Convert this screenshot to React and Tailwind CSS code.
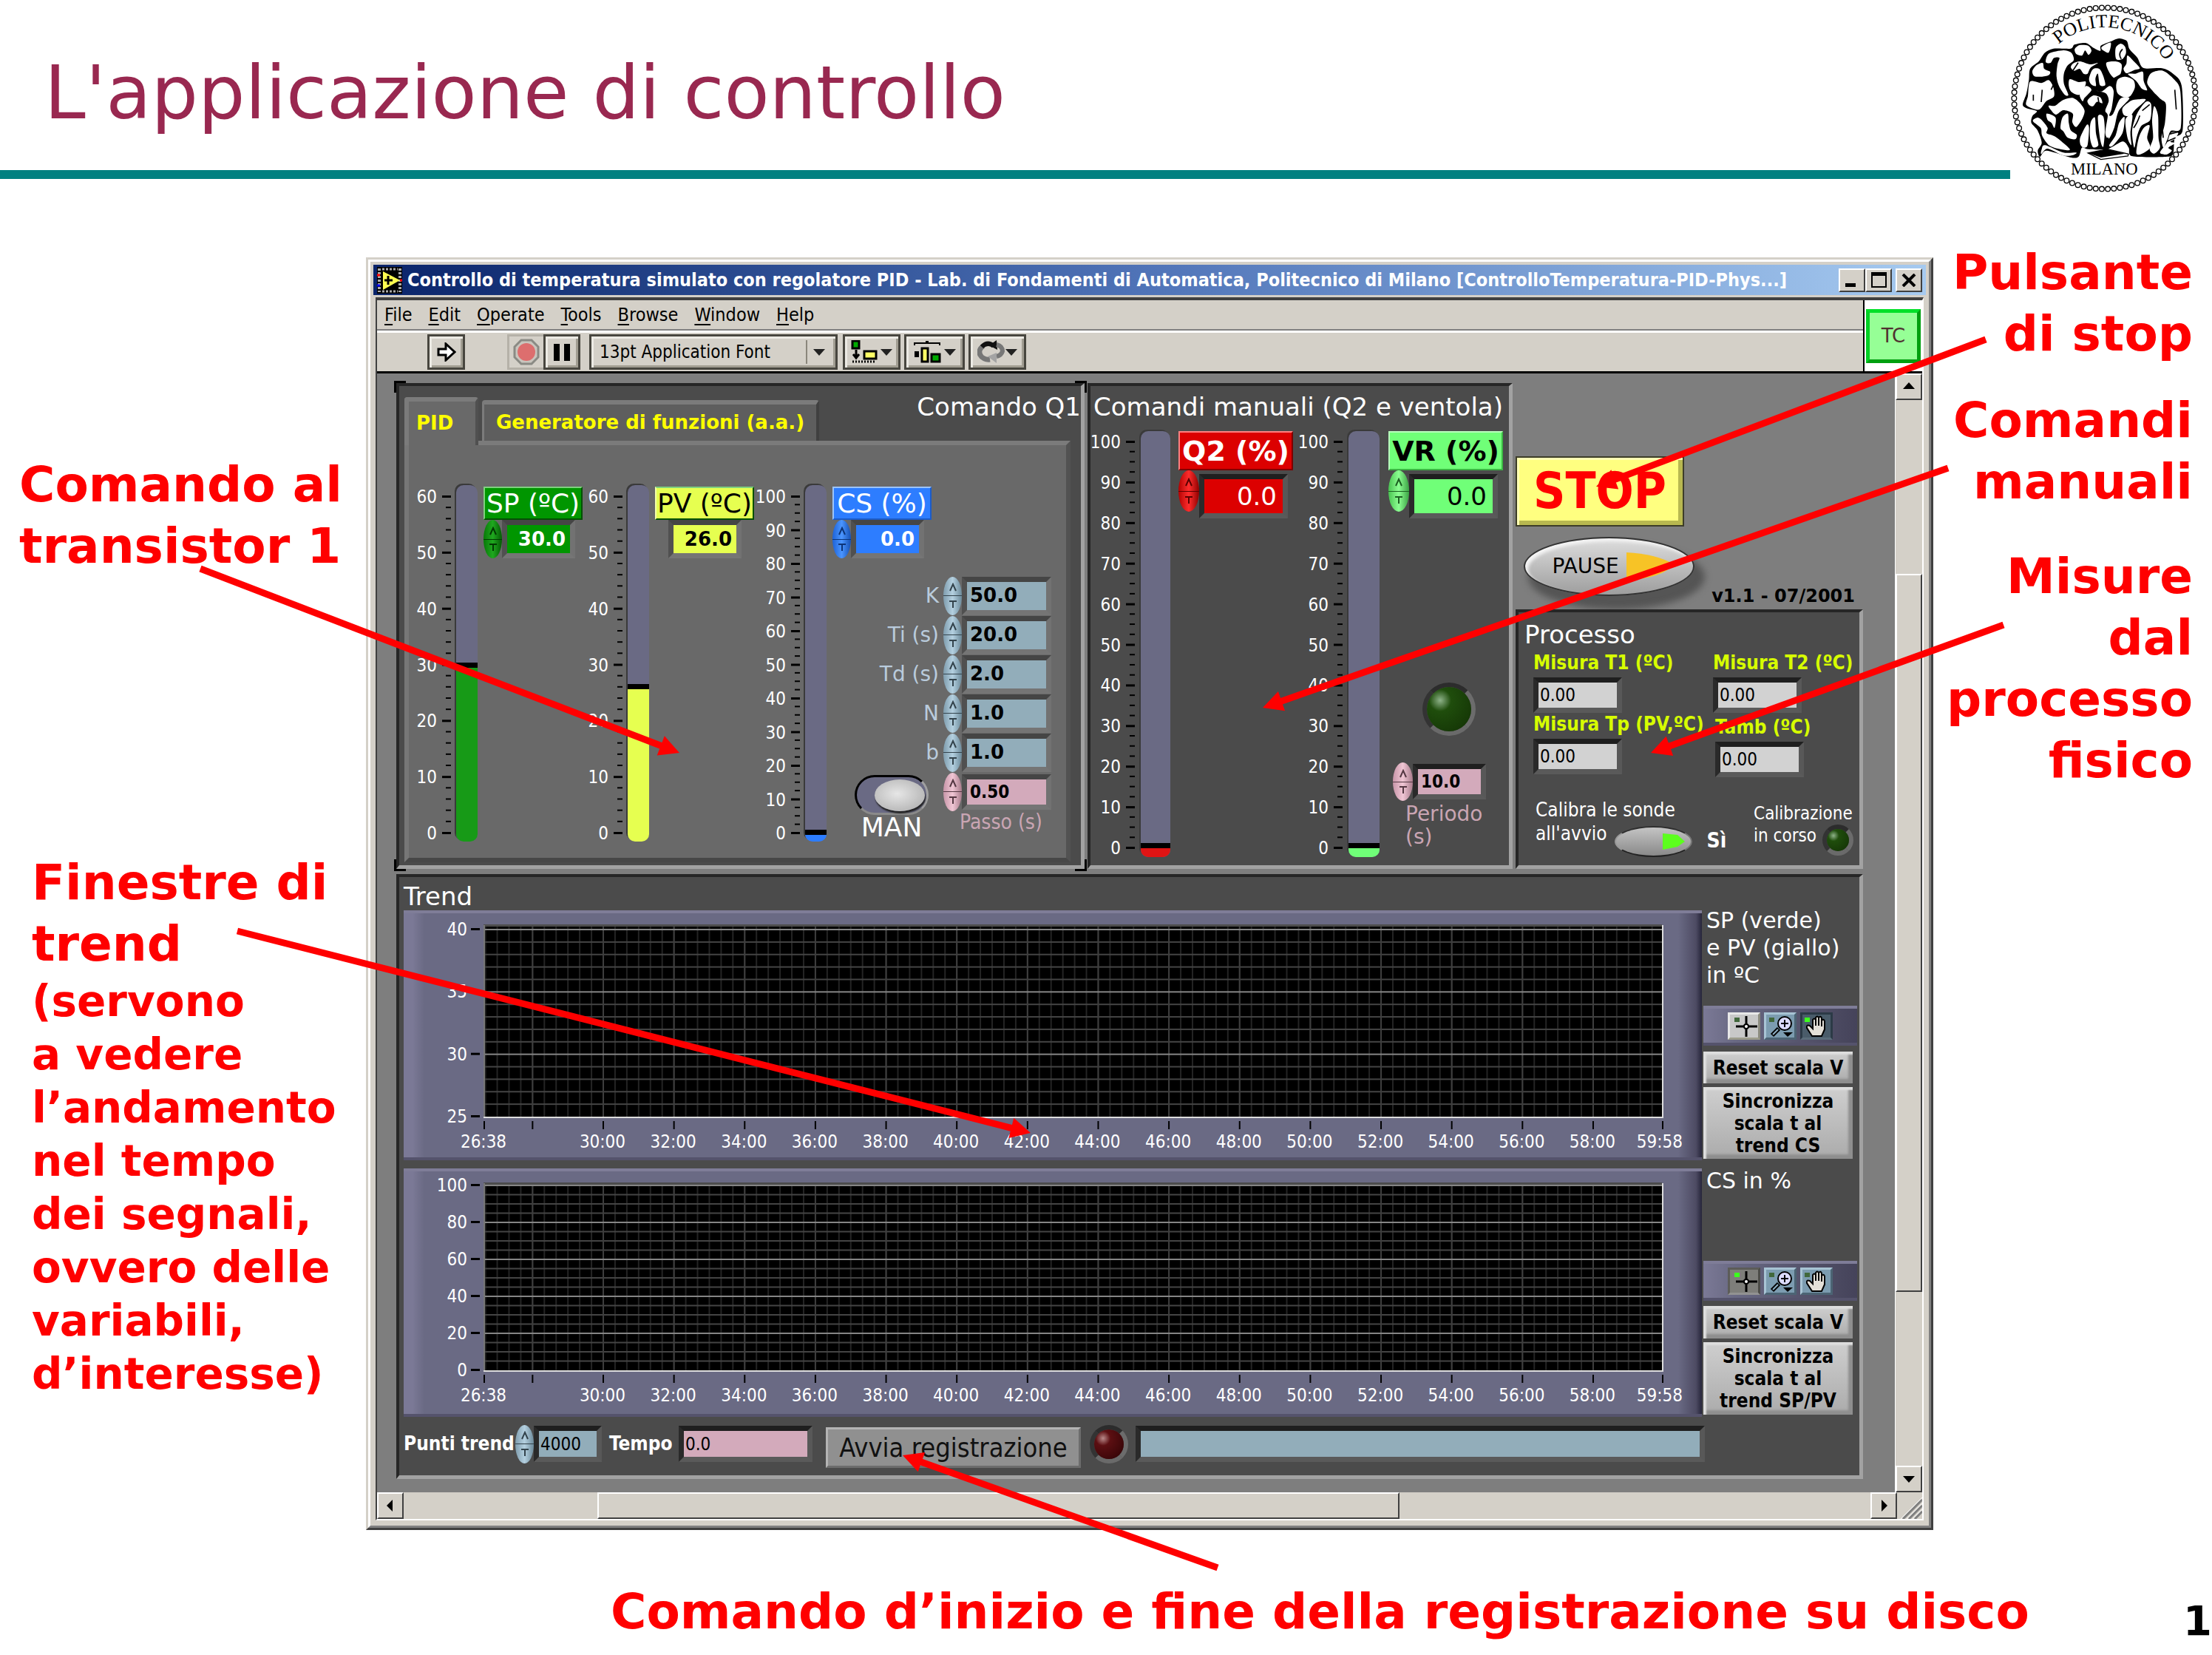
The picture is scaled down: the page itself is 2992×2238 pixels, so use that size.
import React from "react";

const CONDENSED = "font-[family-name:'DejaVu_Sans_Condensed','DejaVu_Sans',sans-serif]";

/* ---------- helpers for drawings ---------- */

function blob(text) {
  const p = text.split(" ").map((s) => s.split(",").map(Number));
  const n = p.length;
  let d = `M${p[0][0]} ${p[0][1]}`;
  for (let i = 0; i < n; i++) {
    const a = p[(i + n - 1) % n];
    const b = p[i];
    const c = p[(i + 1) % n];
    const e = p[(i + 2) % n];
    const k = 7;
    d += `C${b[0] + (c[0] - a[0]) / k} ${b[1] + (c[1] - a[1]) / k} ${c[0] - (e[0] - b[0]) / k} ${c[1] - (e[1] - b[1]) / k} ${c[0]} ${c[1]}`;
  }
  return d + "Z";
}

const SILHOUETTE =
  "135,425 150,380 160,325 165,280 200,250 225,215 260,198 330,198 345,182 390,175 422,195 450,207 452,186 495,168 525,157 557,167 568,200 600,235 625,277 700,278 745,300 780,350 784,528 752,560 745,625 715,637 580,635 565,600 540,575 480,605 400,606 375,600 362,636 330,640 232,612 205,637 196,612 212,580 195,530 170,500 174,472 192,452 150,440";

const WHITES = [
  "174,290 190,266 216,256 222,280 246,292 240,306 210,312 182,310",
  "228,252 242,218 300,205 332,215 342,245 316,268 302,300 302,340 320,385 306,386 282,350 272,310 276,262 284,236 262,236 248,256",
  "165,332 210,338 240,326 258,352 262,392 230,412 200,446 150,428 156,390",
  "346,200 366,184 400,186 414,206 402,224 388,206 376,226 352,220",
  "340,258 368,250 408,262 440,256 410,276 398,300 382,300 366,280 344,288 330,274",
  "428,278 448,282 462,310 470,346 448,346 440,300 430,320 432,350 412,342 404,322 414,290",
  "326,322 362,334 390,332 386,356 364,386 332,374 322,350",
  "455,192 492,174 484,214 462,206",
  "512,196 532,178 550,190 554,216 540,240 514,240",
  "474,256 512,250 536,262 532,300 508,318 486,294",
  "560,226 586,250 610,278 586,286 556,298 544,280 556,258",
  "514,350 522,322 552,312 584,326 590,356 572,390 546,396 520,380",
  "592,300 622,292 626,330 640,366 618,360 596,330 562,302",
  "640,338 656,298 704,288 748,322 774,368 776,520 736,532 722,566 706,600 698,560 712,500 716,424 696,404 664,372",
  "692,620 720,580 736,540 766,540 750,566 734,576 752,582 726,600 740,612 718,628",
  "580,520 600,460 634,414 656,424 652,488 616,512 598,556 588,600 580,560",
  "540,440 574,410 604,404 634,406 590,448 572,470 546,468",
  "668,432 684,470 686,560 692,600 668,624 650,606 664,560 660,490",
  "606,560 626,520 650,510 640,560 652,600 616,626 596,622",
  "430,368 456,372 488,350 504,372 496,440 486,470 502,462 530,402 568,400 524,452 506,520 484,564 470,540 480,470 470,450 484,410 472,380",
  "398,408 422,388 450,396 458,420 436,414 420,432 404,426",
  "366,384 392,350 414,366 386,398 378,412",
  "240,430 266,430 296,408 336,398 366,418 386,450 376,484 352,516 336,496 338,462 300,448 270,466 250,448",
  "176,492 196,478 216,492 236,520 232,542 268,556 326,606 296,608 244,592 214,552 208,520",
  "296,478 318,462 322,500 330,530 354,548 348,566 318,560 300,534 288,520",
  "232,462 268,478 264,520 252,500 236,488",
  "212,606 226,590 300,620 352,620 340,630 300,632 236,604 210,626",
  "368,560 394,508 404,520 398,590 384,600 370,590",
  "410,500 428,478 432,540 442,590 420,598 408,560",
  "440,474 462,474 468,530 462,596 450,570",
  "526,500 548,476 540,540 500,592 486,590 512,550",
  "552,486 580,468 572,540 576,590 560,560",
  "690,300 706,306 700,312 686,306",
];

const LINES =
  "M178 385V410M214 365L210 415M752 365L758 445M440 395L448 440M250 365L262 340M268 352V395M540 200Q520 220 535 240M680 440Q700 480 705 560M610 470Q600 500 585 520M730 545L770 535M720 575L755 560M480 600L480 560M620 450L650 425M360 255L330 300M505 320L540 300";

function Seal() {
  const ring = Array.from({ length: 94 }, (_, i) => {
    const a = (i / 94) * Math.PI * 2;
    return [468 + Math.cos(a) * 368, 400 + Math.sin(a) * 368];
  });
  return (
    <svg viewBox="84 16 768 768" className="block h-[256px] w-[256px]" role="img" aria-label="Politecnico Milano">
      {ring.map(([x, y], i) => (
        <circle key={i} cx={x} cy={y} r="10" fill="none" stroke="#000" strokeWidth="4" />
      ))}
      <path id="seal-arc" d="M194 309A289 289 0 0 1 757 400" fill="none" />
      <text className="font-[family-name:'Liberation_Serif',serif]" fontSize="76" fill="#000">
        <textPath href="#seal-arc" startOffset="156">POLITECNICO</textPath>
      </text>
      <path d={blob(SILHOUETTE)} fill="#000" />
      {WHITES.map((w) => (
        <path key={w} d={blob(w)} fill="#fff" />
      ))}
      <path d={LINES} fill="none" stroke="#000" strokeWidth="5" />
      <path d="M400 622L478 606L564 626L562 634L452 648Z" fill="#fff" stroke="#000" strokeWidth="4" />
      <path d="M400 622L478 606L550 624L452 640Z" fill="#000" />
      <path d="M470 560H484V615H466Z" fill="#000" />
      <text x="466" y="710" textAnchor="middle" className="font-[family-name:'Liberation_Serif',serif]" fontSize="68" fill="#000">
        MILANO
      </text>
    </svg>
  );
}

/* ---------- annotation arrows ---------- */

const ARROWS = [
  [271, 769, 919, 1018],
  [321, 1259, 1394, 1532],
  [2686, 459, 2159, 658],
  [2635, 633, 1708, 957],
  [2710, 845, 2233, 1018],
  [1647, 2120, 1221, 1968],
];

function Arrows() {
  return (
    <svg viewBox="0 0 2992 2238" className="pointer-events-none absolute left-0 top-0 w-full" aria-hidden="true">
      {ARROWS.map(([x1, y1, x2, y2]) => {
        const l = Math.hypot(x2 - x1, y2 - y1);
        const ux = (x2 - x1) / l;
        const uy = (y2 - y1) / l;
        const bx = x2 - ux * 27;
        const by = y2 - uy * 27;
        return (
          <g key={x1} fill="#f00" stroke="#f00">
            <line x1={x1} y1={y1} x2={bx + ux * 4} y2={by + uy * 4} strokeWidth="9" />
            <path stroke="none" d={`M${x2} ${y2}L${bx - uy * 14} ${by + ux * 14}L${bx + uy * 14} ${by - ux * 14}Z`} />
          </g>
        );
      })}
    </svg>
  );
}

/* ---------- Windows widgets ---------- */

const RAISED = "border-2 border-t-white border-l-white border-r-[#404040] border-b-[#404040] bg-[#d4d0c8]";
const TOOL = "flex h-12 items-center justify-center border-[3px] border-[#48463f] bg-[#d4d0c8] shadow-[inset_3px_3px_0_#eceae4,inset_-3px_-3px_0_#a19d92]";

function VIIcon() {
  return (
    <svg viewBox="0 0 34 36" className="h-9 w-[34px] shrink-0" aria-hidden="true">
      <rect width="34" height="36" fill="#000" />
      <path d="M3 2V34M31 2V34" stroke="#aaa" strokeWidth="4" strokeDasharray="3 2" />
      <path d="M7 3H28M7 33H28" stroke="#aaa" strokeWidth="3" strokeDasharray="3 2" />
      <path d="M8 6L31 18L8 31Z" fill="#ffff50" />
      <path d="M10 18H21M15 12V24" stroke="#000" strokeWidth="3" />
      <path d="M0 11H4M31 18H34" stroke="#f00" strokeWidth="3" />
      <path d="M0 25H4" stroke="#00f" strokeWidth="3" />
    </svg>
  );
}

function TitleBar() {
  return (
    <div className="flex h-[41px] items-center gap-[7px] bg-linear-to-r from-[#0a246a] via-[#5074b8] to-[#a6caf0] px-[5px]">
      <VIIcon />
      <span className={"flex-1 whitespace-nowrap text-[25px] leading-none font-bold text-white " + CONDENSED}>
        Controllo di temperatura simulato con regolatore PID - Lab. di Fondamenti di Automatica, Politecnico di Milano [ControlloTemperatura-PID-Phys...]
      </span>
      <div className="flex">
        <button aria-label="Minimize" className={"flex h-8 w-9 items-end px-[7px] pb-[5px] " + RAISED}>
          <span className="h-[5px] w-[14px] bg-black" />
        </button>
        <button aria-label="Maximize" className={"flex h-8 w-9 items-center justify-center " + RAISED}>
          <span className="h-[21px] w-[21px] border-2 border-t-[5px] border-black" />
        </button>
        <button aria-label="Close" className={"ml-[5px] flex h-8 w-9 items-center justify-center " + RAISED}>
          <svg viewBox="0 0 20 18" className="h-[18px] w-5">
            <path d="M2 1L18 17M18 1L2 17" stroke="#000" strokeWidth="4" />
          </svg>
        </button>
      </div>
    </div>
  );
}

const MENUS = [
  ["F", "ile"],
  ["E", "dit"],
  ["O", "perate"],
  ["T", "ools"],
  ["B", "rowse"],
  ["W", "indow"],
  ["H", "elp"],
];

function Caret() {
  return (
    <svg viewBox="0 0 16 9" className="h-[9px] w-4" aria-hidden="true">
      <path d="M0 0H16L8 9Z" fill="#222" />
    </svg>
  );
}

function Toolbar() {
  return (
    <div className="flex h-[52px] items-center pl-[68px]">
      <button aria-label="Run" className={"w-[51px] " + TOOL}>
        <svg viewBox="0 0 26 26" className="h-[26px] w-[26px]">
          <path d="M2 9H12V2L24 13L12 24V17H2Z" fill="#fff" stroke="#000" strokeWidth="3" />
        </svg>
      </button>
      <button aria-label="Abort" className="ml-[57px] flex h-12 w-[49px] items-center justify-center border-[3px] border-r-0 border-[#b5b1a8] bg-[#d4d0c8]">
        <svg viewBox="0 0 36 36" className="h-9 w-9">
          <path d="M11 2H25L34 11V25L25 34H11L2 25V11Z" fill="#c9c5bd" stroke="#8a8a84" strokeWidth="3" />
          <circle cx="18" cy="18" r="12" fill="#dd6e6e" />
        </svg>
      </button>
      <button aria-label="Pause execution" className={"w-[50px] gap-[6px] " + TOOL}>
        <span className="h-[23px] w-[8px] bg-black" />
        <span className="h-[23px] w-[8px] bg-black" />
      </button>
      <div className={"relative ml-3 w-[336px] " + TOOL}>
        <select aria-label="Font" className={"w-full appearance-none bg-transparent pl-[11px] text-[24px] leading-[36px] text-black " + CONDENSED}>
          <option>13pt Application Font</option>
        </select>
        <span className="pointer-events-none absolute right-[14px] top-[5px] flex h-8 items-center border-l-2 border-[#8a867c] pl-[8px]">
          <Caret />
        </span>
      </div>
      <button aria-label="Align objects" className={"ml-[7px] w-[78px] gap-1 " + TOOL}>
        <svg viewBox="0 0 36 32" className="h-8 w-9">
          <rect x="2" y="1" width="9" height="10" fill="#0a0" stroke="#000" strokeWidth="3" />
          <path d="M7 13V23M3 19L7 24L11 19" stroke="#000" strokeWidth="3" fill="none" />
          <rect x="18" y="15" width="16" height="10" fill="#ffff66" stroke="#000" strokeWidth="3" />
          <path d="M2 29H34" stroke="#000" strokeWidth="3" strokeDasharray="2 2" />
        </svg>
        <Caret />
      </button>
      <button aria-label="Distribute objects" className={"ml-[5px] w-[82px] gap-1 " + TOOL}>
        <svg viewBox="0 0 38 30" className="h-[30px] w-[38px]">
          <path d="M2 6V3H36V6" stroke="#000" strokeWidth="2" fill="none" />
          <path d="M17 0H21V3H17Z" fill="#000" />
          <rect x="2" y="14" width="6" height="8" fill="#000" />
          <rect x="12" y="10" width="8" height="18" fill="#ffff66" stroke="#000" strokeWidth="3" />
          <rect x="25" y="18" width="11" height="10" fill="#0a0" stroke="#000" strokeWidth="3" />
        </svg>
        <Caret />
      </button>
      <button aria-label="Reorder" className={"ml-[5px] w-[78px] " + TOOL}>
        <svg viewBox="0 0 38 32" className="h-8 w-[38px]">
          <path d="M17 26A12 10 0 0 1 8 8" stroke="#777" strokeWidth="7" fill="none" />
          <path d="M6 9Q14 1 22 8" stroke="#111" strokeWidth="6" fill="none" />
          <path d="M26 0L16 7L27 13Z" fill="#111" />
          <path d="M26 6Q34 8 34 15A11 10 0 0 1 26 22" stroke="#777" strokeWidth="6" fill="none" />
          <path d="M14 22L26 17V31Z" fill="#a4a4a4" />
        </svg>
        <Caret />
      </button>
    </div>
  );
}

const ARROW_PATHS = {
  Up: "M1 12H17L9 3Z",
  Down: "M1 5H17L9 14Z",
  Left: "M12 1V17L4 9Z",
  Right: "M6 1V17L14 9Z",
};

function ScrollButton({ dir }) {
  return (
    <button aria-label={"Scroll " + dir.toLowerCase()} className={"flex h-9 w-9 shrink-0 items-center justify-center " + RAISED}>
      <svg viewBox="0 0 18 18" className="h-[18px] w-[18px]">
        <path d={ARROW_PATHS[dir]} fill="#000" />
      </svg>
    </button>
  );
}

/* ---------- LabVIEW widgets ---------- */

const FRAME_PANE = "border-[7px] border-t-[#454545] border-l-[#505050] border-r-[#727272] border-b-[#757575]";
const FRAME_DARK = "border-[7px] border-t-[#1f1f1f] border-l-[#2a2a2a] border-r-[#585858] border-b-[#5a5a5a]";
const PANEL = "relative border-t-4 border-l-4 border-r-[5px] border-b-[5px] border-t-[#262626] border-l-[#262626] border-r-[#a2a2a2] border-b-[#a2a2a2] bg-[#4b4b4b]";

const PILL = {
  blue: "bg-linear-to-r from-[#7f9dae] via-[#b4d0e0] to-[#6d8b9b] text-[#33434c]",
  pink: "bg-linear-to-r from-[#c795a8] via-[#f0c6d4] to-[#a97c8c] text-[#553843]",
  green: "bg-linear-to-r from-[#067a06] via-[#1fa81f] to-[#045c04] text-[#023a02]",
  azure: "bg-linear-to-r from-[#1d62d8] via-[#4a95ff] to-[#1550b4] text-[#0c3478]",
  red: "bg-linear-to-r from-[#b40000] via-[#ff2c2c] to-[#900000] text-[#5a0000]",
  lime: "bg-linear-to-r from-[#49c452] via-[#8cff92] to-[#3aa344] text-[#1c5f22]",
};

function Pill({ color, name, size = "h-[52px] w-[25px]" }) {
  return (
    <span className={"flex shrink-0 flex-col overflow-hidden rounded-[50%] " + size + " " + PILL[color]}>
      <button aria-label={"Increase " + name} className="flex flex-1 items-center justify-center border-b border-current pt-1">
        <svg viewBox="0 0 12 12" className="h-3 w-3">
          <path d="M2 11L6 2L10 11" fill="none" stroke="currentColor" strokeWidth="2" />
        </svg>
      </button>
      <button aria-label={"Decrease " + name} className="flex flex-1 items-center justify-center pb-1">
        <svg viewBox="0 0 12 12" className="h-3 w-3">
          <path d="M1 2H11M6 3V11" fill="none" stroke="currentColor" strokeWidth="2" />
        </svg>
      </button>
    </span>
  );
}

function Field({ id, value, frame, look, label }) {
  return (
    <span className={"flex " + frame}>
      <input id={id} aria-label={label} defaultValue={value} className={"min-w-0 outline-none " + look} />
    </span>
  );
}

function Scale({ max, step, top, bottom, height, minor }) {
  const count = max / step;
  const gap = (bottom - top) / count;
  const ticks = [];
  for (let i = 0; i <= count; i++) {
    ticks.push(
      <g key={i}>
        <text x="31" y={top + gap * i + 9} textAnchor="end" fontSize="24" fill="#fff">
          {max - step * i}
        </text>
        <rect x="38" y={top + gap * i - 1} width="12" height="3" fill="#000" />
        {i < count &&
          Array.from({ length: minor }, (_, j) => (
            <rect key={j} x="43" y={top + gap * (i + (j + 1) / (minor + 1)) - 1} width="7" height="2" fill="#000" />
          ))}
      </g>
    );
  }
  return (
    <svg className={"block w-[50px] shrink-0 overflow-visible " + height + " " + CONDENSED} aria-hidden="true">
      {ticks}
    </svg>
  );
}

function Track({ label, value, max, look, fill, level, height }) {
  return (
    <div className={"relative flex shrink-0 flex-col justify-end overflow-hidden rounded-[10px] bg-[#6a6a84] shadow-[-2px_-2px_0_#3a3a3a] " + look + " " + height}>
      <div className={"border-t-[7px] border-black " + fill + " " + level} />
      <input type="range" min="0" max={max} defaultValue={value} aria-label={label} className="absolute inset-0 h-full w-full opacity-0 [direction:rtl] [writing-mode:vertical-lr]" />
    </div>
  );
}

function Led({ look, color }) {
  return (
    <span className={"block shrink-0 rounded-full border-[6px] border-t-[#2c2c2c] border-l-[#333] border-r-[#6c6c6c] border-b-[#6a6a6a] " + look}>
      <span className={"block h-full w-full rounded-full " + color} />
    </span>
  );
}

const LED_GREEN = "bg-radial-[at_30%_30%] from-[#8fb38a] via-[#1f4d0c] via-25% to-[#123004]";
const LED_RED = "bg-radial-[at_30%_30%] from-[#b98a8a] via-[#5c0f12] via-25% to-[#2c0204]";

/* ---------- Comando Q1 ---------- */

const PARAMS = [
  ["K", "50.0"],
  ["Ti (s)", "20.0"],
  ["Td (s)", "2.0"],
  ["N", "1.0"],
  ["b", "1.0"],
];

function Readout({ title, id, value, titleLook, valueLook, pill }) {
  return (
    <div className="w-[134px] pt-[2px]">
      <label htmlFor={id} className={"flex h-[45px] items-center justify-center border-2 text-[36px] leading-none whitespace-nowrap " + titleLook}>
        {title}
      </label>
      <div className={"flex items-center " + (pill ? "" : "pl-[18px]")}>
        {pill && <Pill color={pill} name={title} />}
        <Field id={id} value={value} frame={FRAME_PANE} look={"h-[38px] w-[85px] pr-[6px] text-right text-[26px] font-bold " + valueLook} />
      </div>
    </div>
  );
}

function Corner({ look }) {
  return <span className={"absolute h-4 w-4 border-black " + look} />;
}

function ComandoQ1() {
  return (
    <section className={PANEL}>
      <Corner look="-left-[7px] -top-[7px] border-l-[3px] border-t-[3px]" />
      <Corner look="-right-[8px] -top-[7px] border-r-[3px] border-t-[3px]" />
      <Corner look="-bottom-[8px] -left-[7px] border-b-[3px] border-l-[3px]" />
      <Corner look="-bottom-[8px] -right-[8px] border-b-[3px] border-r-[3px]" />
      <div className="flex h-[74px] items-end pl-[7px]" role="tablist">
        <button role="tab" aria-selected="true" className="z-10 -mb-[6px] h-[65px] w-[100px] rounded-t-[4px] border-t-[6px] border-l-[6px] border-r-[4px] border-t-[#7b7b7b] border-l-[#7b7b7b] border-r-[#505050] bg-[#696969] pl-[10px] text-left text-[26px] font-bold text-[#ff0]">
          PID
        </button>
        <button role="tab" aria-selected="false" className="ml-[5px] h-[55px] w-[456px] rounded-t-[4px] border-t-[6px] border-l-[3px] border-r-[4px] border-t-[#7b7b7b] border-l-[#7b7b7b] border-r-[#404040] bg-[#5e5e5e] text-[26px] font-bold whitespace-nowrap text-[#ff0]">
          Generatore di funzioni (a.a.)
        </button>
        <h2 className="mb-[26px] ml-auto text-[34px] leading-[40px] whitespace-nowrap text-white">Comando Q1</h2>
      </div>
      <div className="mr-[14px] mb-1 ml-[7px] flex border-[6px] border-t-[#7b7b7b] border-r-[#525252] border-b-[#474747] border-l-[#777] bg-[#696969] pt-[54px] pr-[20px] pb-[22px] pl-[7px]">
        <div className="flex">
          <Scale max={60} step={10} top={15} bottom={470} height="h-[482px]" minor={4} />
          <div className="ml-[7px] flex gap-2">
            <Track label="SP" value={30} max={60} look="w-[29px]" height="h-[482px]" fill="bg-[#179a17]" level="h-[242px]" />
            <Readout title="SP (ºC)" id="sp" value="30.0" pill="green" titleLook="bg-[#009600] border-t-[#7fd07f] border-l-[#7fd07f] border-r-[#045004] border-b-[#045004] text-white" valueLook="bg-[#009600] text-white" />
          </div>
        </div>
        <div className="ml-1 flex">
          <Scale max={60} step={10} top={15} bottom={470} height="h-[482px]" minor={4} />
          <div className="ml-[7px] flex gap-2">
            <Track label="PV" value={26} max={60} look="w-[29px]" height="h-[482px]" fill="bg-[#e6ff50]" level="h-[213px]" />
            <Readout title="PV (ºC)" id="pv" value="26.0" titleLook="bg-[#e6ff50] border-t-[#7fd07f] border-l-[#f4ffa8] border-r-[#045004] border-b-[#045004] text-black" valueLook="bg-[#e6ff50] text-black" />
          </div>
        </div>
        <div className="ml-[12px] flex flex-1">
          <Scale max={100} step={10} top={15} bottom={470} height="h-[482px]" minor={3} />
          <div className="ml-[7px] flex flex-1 gap-2">
            <Track label="CS" value={0} max={100} look="w-[29px]" height="h-[482px]" fill="bg-[#2d7dff]" level="h-[16px]" />
            <div className="flex flex-1 flex-col">
              <Readout title="CS (%)" id="cs" value="0.0" pill="azure" titleLook="bg-[#2d7dff] border-t-[#9cc4ff] border-l-[#9cc4ff] border-r-[#1c5cc8] border-b-[#1c5cc8] text-white" valueLook="bg-[#2d7dff] text-white" />
              <div className="mt-6 flex flex-col items-end">
                {PARAMS.map(([name, value]) => (
                  <div key={name} className="flex h-[53px] items-center">
                    <label htmlFor={"par-" + name} className="pr-[6px] text-[28px] leading-none text-[#b9cbdc]">
                      {name}
                    </label>
                    <Pill color="blue" name={name} />
                    <Field id={"par-" + name} value={value} frame={FRAME_PANE} look="h-[38px] w-[107px] bg-[#92adba] pl-1 text-[26px] font-bold text-black" />
                  </div>
                ))}
              </div>
              <div className="flex items-start justify-end">
                <label className="mr-5 flex flex-col items-center text-[36px] leading-[34px] text-white">
                  <span className="mt-1 flex h-[54px] w-[100px] items-center justify-end rounded-full border-[3px] border-t-black border-r-[#a0a0a0] border-b-[#8a8a8a] border-l-black bg-[#6a6a84] pr-[2px]">
                    <span className="h-[43px] w-[68px] rounded-[50%] bg-radial-[at_45%_45%] from-[#e6e6e6] to-[#a8a8a8] shadow-[1px_3px_2px_#222]" />
                    <input type="checkbox" className="sr-only" />
                  </span>
                  MAN
                </label>
                <div>
                  <div className="flex h-[53px] items-center">
                    <Pill color="pink" name="Passo" />
                    <Field id="passo" value="0.50" frame={FRAME_PANE} look={"h-[34px] w-[107px] bg-[#d3aabb] pl-1 text-[24px] font-bold text-black " + CONDENSED} />
                  </div>
                  <label htmlFor="passo" className={"block pl-[22px] text-[28px] leading-[30px] whitespace-nowrap text-[#c9a5b3] " + CONDENSED}>
                    Passo (s)
                  </label>
                </div>
              </div>
            </div>
          </div>
        </div>
      </div>
    </section>
  );
}

/* ---------- Comandi manuali ---------- */

function BigReadout({ title, id, pill, titleLook, valueLook }) {
  return (
    <div className="w-[155px]">
      <label htmlFor={id} className={"flex h-[53px] items-center justify-center border-2 text-[38px] leading-none font-bold whitespace-nowrap " + titleLook}>
        {title}
      </label>
      <div className="flex items-start">
        <Pill color={pill} name={title} size="h-[56px] w-[28px]" />
        <span className="mt-[5px] flex">
          <Field id={id} value="0.0" frame={FRAME_DARK} look={"h-[46px] w-[106px] pr-2 text-right text-[34px] " + valueLook} />
        </span>
      </div>
    </div>
  );
}

function ComandiManuali() {
  return (
    <section className={PANEL + " pt-2"}>
      <h2 className={"pl-1 text-[34px] leading-[40px] whitespace-nowrap text-white"}>Comandi manuali (Q2 e ventola)</h2>
      <div className="mt-[13px] flex pl-[10px]">
        <Scale max={100} step={10} top={14} bottom={563} height="h-[576px]" minor={3} />
        <div className="ml-2 flex gap-[11px]">
          <Track label="Q2" value={0} max={100} look="w-10" height="h-[576px]" fill="bg-[#e01414]" level="h-[19px]" />
          <BigReadout title="Q2 (%)" id="q2" pill="red" titleLook="bg-[#dc0000] border-t-[#ff8080] border-l-[#ff8080] border-r-[#800000] border-b-[#800000] text-white" valueLook="bg-[#dc0000] text-white" />
        </div>
        <div className="ml-[17px] flex">
          <Scale max={100} step={10} top={14} bottom={563} height="h-[576px]" minor={3} />
          <div className="ml-2 flex gap-[12px]">
            <Track label="VR" value={0} max={100} look="w-[42px]" height="h-[576px]" fill="bg-[#70ff78]" level="h-[19px]" />
            <div>
              <BigReadout title="VR (%)" id="vr" pill="lime" titleLook="bg-[#70ff78] border-t-[#b8ffbc] border-l-[#b8ffbc] border-r-[#3cb844] border-b-[#3cb844] text-black" valueLook="bg-[#70ff78] text-black" />
              <div className="mt-[222px] ml-[46px]">
                <Led look="h-[72px] w-[72px]" color={LED_GREEN} />
              </div>
              <div className="mt-[36px] ml-[6px] flex items-center">
                <Pill color="pink" name="Periodo" size="h-[52px] w-[27px]" />
                <Field id="periodo" value="10.0" frame={FRAME_DARK} look={"h-[34px] w-[85px] bg-[#d3aabb] pl-1 text-[24px] font-bold text-black " + CONDENSED} />
              </div>
              <label htmlFor="periodo" className="block pt-[2px] pl-[23px] text-[28px] leading-[31px] text-[#c9a5b3]">
                Periodo
                <br />
                (s)
              </label>
            </div>
          </div>
        </div>
      </div>
    </section>
  );
}

/* ---------- right block ---------- */

function Measure({ label, id }) {
  return (
    <div className="flex flex-col items-start gap-[6px]">
      <label htmlFor={id} className={"text-[26px] leading-7 font-bold whitespace-nowrap text-[#d7ff00] " + CONDENSED}>
        {label}
      </label>
      <Field id={id} value="0.00" frame={FRAME_DARK} look={"h-[34px] w-[106px] bg-[#d2d2d2] pl-[2px] text-[24px] text-black " + CONDENSED} />
    </div>
  );
}

function RightBlock() {
  return (
    <div className="flex flex-col">
      <button className={"mt-[99px] h-[95px] w-[228px] border-2 border-[#3c3c28] bg-[#ffff80] text-[67px] leading-none font-bold text-[#f00] shadow-[inset_3px_3px_0_#ffffb4,inset_-6px_-6px_0_#b8b850] " + CONDENSED}>
        STOP
      </button>
      <div className="mt-auto flex items-end justify-between pr-[11px] pl-[11px]">
        <button className="mb-[18px] flex h-[80px] w-[231px] items-center justify-center gap-[10px] rounded-[50%] border-2 border-[#333] bg-linear-to-b from-[#dedede] to-[#9e9e9e] pl-[10px] text-[28px] text-black shadow-[inset_4px_4px_4px_#f4f4f4,10px_14px_10px_4px_#555]">
          PAUSE
          <svg viewBox="0 0 64 38" className="h-[38px] w-[64px]">
            <path d="M0 0Q40 2 64 16Q50 34 0 38Z" fill="#f7c326" />
          </svg>
        </button>
        <span className="mb-[4px] text-[24px] leading-7 font-bold whitespace-nowrap text-black">v1.1 - 07/2001</span>
      </div>
      <section className={PANEL + " pt-[10px] pb-[11px]"}>
        <h2 className="pl-2 text-[34px] leading-[40px] text-white">Processo</h2>
        <div className="mt-1 grid grid-cols-[243px_1fr] gap-y-px pl-5">
          <Measure label="Misura T1 (ºC)" id="t1" />
          <Measure label="Misura T2 (ºC)" id="t2" />
          <Measure label="Misura Tp (PV,ºC)" id="tp" />
          <div className="pt-1 pl-[3px]">
            <Measure label="Tamb (ºC)" id="tamb" />
          </div>
        </div>
        <div className="mt-[28px] flex items-start pl-[23px] text-white">
          <label className={"text-[26px] leading-8 whitespace-nowrap " + CONDENSED}>
            Calibra le sonde
            <span className="flex items-start gap-[10px]">
              all&apos;avvio
              <span className="mt-[6px] flex h-[42px] w-[105px] items-center justify-end rounded-[50%] border-2 border-t-[#2e2e2e] border-r-[#777] border-b-[#222] border-l-[#999] bg-linear-to-b from-[#c4c4c4] to-[#8a8a8a] pr-2">
                <svg viewBox="0 0 30 22" className="h-[22px] w-[30px]">
                  <path d="M0 0L20 2L30 11L20 18L0 22Z" fill="#5cff1e" />
                </svg>
                <input type="checkbox" defaultChecked className="sr-only" />
              </span>
            </span>
          </label>
          <span className={"mt-[44px] ml-5 text-[28px] leading-7 font-bold " + CONDENSED}>Sì</span>
          <span className={"mt-[6px] ml-auto pr-2 text-[24px] leading-[30px] whitespace-nowrap " + CONDENSED}>
            Calibrazione
            <span className="flex items-start gap-2">
              in corso
              <Led look="h-[42px] w-[42px]" color={LED_GREEN} />
            </span>
          </span>
        </div>
      </section>
    </div>
  );
}

/* ---------- Trend ---------- */

const START = 26 * 60 + 38;
const SPAN = 2000;
const MAJORS = Array.from({ length: 16 }, (_, i) => 28 + i * 2);
const MINORS = Array.from({ length: 101 }, (_, i) => START - (START % 20) + 20 * i).filter((s) => s > START && s < START + SPAN);
const pct = (s) => ((s - START) / SPAN) * 100 + "%";

function Plot({ name, ticks, top, bottom, minor, height, look }) {
  const gap = (bottom - top) / (ticks.length - 1);
  const rows = [];
  ticks.forEach((t, i) => {
    if (i < ticks.length - 1) {
      for (let j = 1; j < minor; j++) rows.push(top + gap * (i + j / minor));
    }
  });
  return (
    <div className="bg-[linear-gradient(to_right,#7b7996_0,#7b7996_12px,#6a6a84_28px,#6a6a84_calc(100%-32px),#4d4b63_calc(100%-8px),#26253a_100%)]">
      <div className="border-t-4 border-b-4 border-t-[#7f7d98] border-b-[#55536c] pt-4 pr-[54px] pb-[53px] pl-[108px]">
        <svg role="img" aria-label={name} className={"block w-full overflow-visible " + look + " " + CONDENSED} fontSize="24" fill="#fff">
          <rect width="100%" height={height} fill="#000" />
          {MINORS.map((s) => (
            <rect key={s} x={pct(s)} width="2" height={height} fill="#242424" />
          ))}
          {rows.map((y) => (
            <rect key={y} y={y - 1} width="100%" height="2" fill="#444" />
          ))}
          {MAJORS.map((m) => (
            <rect key={m} x={pct(m * 60)} width="2" height={height} fill="#3e3e3e" />
          ))}
          {ticks.slice(0, -1).map((t, i) => (
            <rect key={t} y={top + gap * i - 1} width="100%" height="2" fill="#858585" />
          ))}
          <rect y="-1" width="100%" height="3" fill="#4d4d4d" />
          <rect y="0" width="2" height={height} fill="#777" />
          <rect y={height - 2} width="100%" height="2" fill="#ddd" />
          <rect x="100%" width="2" height={height} fill="#ddd" />
          {ticks.map((t, i) => (
            <g key={t}>
              <text x="-22" y={top + gap * i + 8} textAnchor="end">
                {t}
              </text>
              <rect x="-17" y={top + gap * i - 2} width="12" height="3" fill="#000" />
            </g>
          ))}
          <rect x="0" y={height + 4} width="2" height="11" fill="#000" />
          <text x="0" y={height + 40} textAnchor="middle">
            26:38
          </text>
          {MAJORS.map((m) => (
            <g key={m}>
              <rect x={pct(m * 60)} y={height + 4} width="2" height="11" fill="#000" />
              {m > 28 && (
                <text x={pct(m * 60)} y={height + 40} textAnchor="middle">
                  {m + ":00"}
                </text>
              )}
            </g>
          ))}
          <rect x="100%" y={height + 4} width="2" height="11" fill="#000" />
          <text x="99.8%" y={height + 40} textAnchor="middle">
            59:58
          </text>
        </svg>
      </div>
    </div>
  );
}

function Palette({ looks, on }) {
  const lamp = (i) => (i === on ? "#3dff1e" : "#41683c");
  return (
    <div className="flex h-[54px] items-center justify-center gap-[5px] border-t-4 border-b-4 border-t-[#7f7d98] border-b-[#55536c] bg-linear-to-r from-[#7b7996] via-[#6a6a84] via-20% to-[#45435a]">
      <button aria-label="Cursor" className={"h-[37px] w-11 border-[3px] " + looks[0]}>
        <svg viewBox="0 0 38 31" className="block">
          <rect x="6" y="4" width="7" height="6" fill={lamp(0)} />
          <path d="M8 16H37M22 2V30" stroke="#000" strokeWidth="3" />
          <circle cx="22" cy="16" r="3" fill="#fff" stroke="#000" strokeWidth="2" />
        </svg>
      </button>
      <button aria-label="Zoom" className={"h-[37px] w-11 border-[3px] " + looks[1]}>
        <svg viewBox="0 0 38 31" className="block">
          <rect x="4" y="4" width="7" height="6" fill={lamp(1)} />
          <path d="M17 19L8 28" stroke="#000" strokeWidth="6" />
          <path d="M16 20L9 27" stroke="#8fb0c4" strokeWidth="2" />
          <circle cx="25" cy="12" r="9" fill="#dcdcff" stroke="#000" strokeWidth="2" />
          <path d="M20 12H30M25 7V17" stroke="#000" strokeWidth="2" />
          <path d="M23 24H36L29 30Z" fill="#000" />
        </svg>
      </button>
      <button aria-label="Pan" className={"h-[37px] w-11 border-[3px] " + looks[2]}>
        <svg viewBox="0 0 38 31" className="block">
          <path
            d="M13 29L6 18Q5 13 10 15L14 19V7Q16 4 18 7V15V4Q20 1 22 4V15V4Q25 1 26 5V16V8Q29 5 30 9V20L26 29Z"
            fill="#e4e0d8"
            stroke="#000"
            strokeWidth="2"
          />
          <rect x="3" y="4" width="7" height="6" fill={lamp(2)} />
        </svg>
      </button>
    </div>
  );
}

const P_LIGHT = "bg-[#c8c8c8] border-t-[#e8e8e8] border-l-[#e8e8e8] border-r-[#8c8c80] border-b-[#9c9c8c]";
const P_BLUE = "bg-[#7c9cb0] border-t-[#a8c4d4] border-l-[#a8c4d4] border-r-[#4c6474] border-b-[#4c6474]";
const P_DARKBLUE = "bg-[#4a5c6a] border-t-[#2c3a46] border-l-[#2c3a46] border-r-[#2c3a46] border-b-[#5a6c7a]";
const P_DARK = "bg-[#7e7e7a] border-t-[#5c5c58] border-l-[#5c5c58] border-r-[#4c4c48] border-b-[#929292]";

const GREY_BUTTON =
  "w-[202px] bg-linear-to-b from-[#cfcfcf] to-[#ababab] text-[26px] leading-[30px] font-bold whitespace-nowrap text-black shadow-[inset_4px_4px_2px_#dedede,inset_-6px_-6px_3px_#8e8e8e] " + CONDENSED;

function Trend() {
  return (
    <section className={PANEL + " grid grid-cols-[1fr_208px] gap-x-[2px] pr-[3px] pb-[10px] pl-[6px]"}>
      <div className="pt-[7px]">
        <h2 className="text-[34px] leading-[38px] text-white">Trend</h2>
        <Plot name="SP e PV" ticks={[40, 35, 30, 25]} top={6} bottom={259} minor={5} height={261} look="h-[261px]" />
        <div className="mt-[11px]">
          <Plot name="CS" ticks={[100, 80, 60, 40, 20, 0]} top={3} bottom={253} minor={4} height={255} look="h-[259px]" />
        </div>
      </div>
      <div className="pt-10">
        <p className="h-[134px] pl-1 text-[30px] leading-[37px] whitespace-nowrap text-white">
          SP (verde)
          <br />e PV (giallo)
          <br />
          in ºC
        </p>
        <Palette looks={[P_LIGHT, P_BLUE, P_DARKBLUE]} on={2} />
        <button className={"mt-2 block h-[43px] " + GREY_BUTTON}>Reset scala V</button>
        <button className={"mt-[5px] block h-[97px] " + GREY_BUTTON}>
          Sincronizza
          <br />
          scala t al
          <br />
          trend CS
        </button>
        <p className="mt-[11px] h-[127px] pl-1 text-[30px] leading-[37px] text-white">CS in %</p>
        <Palette looks={[P_DARK, P_BLUE, P_BLUE]} on={0} />
        <button className={"mt-[7px] block h-[44px] " + GREY_BUTTON}>Reset scala V</button>
        <button className={"mt-[5px] block h-[98px] " + GREY_BUTTON}>
          Sincronizza
          <br />
          scala t al
          <br />
          trend SP/PV
        </button>
      </div>
      <div className="col-span-2 mt-1 flex items-center pr-[206px]">
        <label htmlFor="punti" className={"w-[151px] text-[26px] font-bold whitespace-nowrap text-white " + CONDENSED}>
          Punti trend
        </label>
        <Pill color="blue" name="Punti trend" />
        <Field id="punti" value="4000" frame={FRAME_DARK} look={"h-[35px] w-[78px] bg-[#92adba] pl-[2px] text-[24px] text-black " + CONDENSED} />
        <label htmlFor="tempo" className={"ml-[10px] w-[94px] text-[26px] font-bold text-white " + CONDENSED}>
          Tempo
        </label>
        <Field id="tempo" value="0.0" frame={FRAME_DARK} look={"h-[35px] w-[167px] bg-[#d3aabb] pl-[2px] text-[24px] text-black " + CONDENSED} />
        <button className={"ml-[18px] mt-[10px] h-[55px] w-[345px] border-[3px] border-t-[#b4b4b4] border-r-[#6c6c6c] border-b-[#6c6c6c] border-l-[#b4b4b4] bg-[#909090] text-[36px] leading-none whitespace-nowrap text-[#111] " + CONDENSED}>
          Avvia registrazione
        </button>
        <span className="mr-[10px] ml-[12px]">
          <Led look="h-[52px] w-[52px]" color={LED_RED} />
        </span>
        <span className={"flex flex-1 " + FRAME_DARK}>
          <input aria-label="Nome file" className="h-[35px] w-full bg-[#92adba] outline-none" />
        </span>
      </div>
    </section>
  );
}

/* ---------- window and slide ---------- */

function AppWindow() {
  return (
    <div className="border-[3px] border-t-[#d4d0c8] border-r-[#404040] border-b-[#404040] border-l-[#d4d0c8]">
      <div className="border-[3px] border-t-white border-r-[#808080] border-b-[#808080] border-l-white bg-[#d4d0c8] p-1">
        <TitleBar />
        <div className="mx-[3px] mt-[3px] mb-[3px] border-2 border-t-4 border-t-[#404040] border-r-white border-b-white border-l-[#404040]">
          <div className="flex border-b-[3px] border-black">
            <div className="flex-1">
              <nav className={"flex h-[39px] items-center gap-[22px] pl-[10px] text-[25px] text-black " + CONDENSED}>
                {MENUS.map(([a, b]) => (
                  <button key={a}>
                    <u className="underline-offset-4">{a}</u>
                    {b}
                  </button>
                ))}
              </nav>
              <div className="h-[5px] border-t-2 border-t-[#808080] bg-white" />
              <Toolbar />
            </div>
            <div className="flex w-[80px] items-center justify-center border-l-2 border-black bg-white">
              <div className="flex h-[73px] w-[74px] items-center justify-center border-[5px] border-t-[#00e028] border-r-[#00a010] border-b-[#00a010] border-l-[#00d024] bg-[#96ff96] text-[26px] text-[#503030]">TC</div>
            </div>
          </div>
          <div className="flex">
            <div className="flex min-w-0 flex-1 flex-col gap-[7px] bg-[#7e7e7e] pt-[13px] pr-[43px] pb-[18px] pl-[26px]">
              <div className="grid grid-cols-[931fr_575fr_470fr] gap-[4px]">
                <ComandoQ1 />
                <ComandiManuali />
                <RightBlock />
              </div>
              <Trend />
            </div>
            <div className="flex w-[37px] flex-col border-l border-white bg-[#d4d0c8]">
              <ScrollButton dir="Up" />
              <div className="flex-[236]" />
              <div className={"flex-[973] " + RAISED} />
              <div className="flex-[236]" />
              <ScrollButton dir="Down" />
            </div>
          </div>
          <div className="flex h-9 bg-[#d4d0c8]">
            <ScrollButton dir="Left" />
            <div className="flex-[263]" />
            <div className={"flex-[1085] " + RAISED} />
            <div className="flex-[639]" />
            <ScrollButton dir="Right" />
            <svg viewBox="0 0 34 36" className="h-9 w-[34px]" aria-hidden="true">
              <path d="M8 36L34 10M16 36L34 18M24 36L34 26" stroke="#808080" strokeWidth="3" />
              <path d="M5 36L34 7M13 36L34 15M21 36L34 23" stroke="#fff" strokeWidth="1" />
            </svg>
          </div>
        </div>
      </div>
    </div>
  );
}

export default function App() {
  return (
    <div className="relative min-h-screen w-full overflow-hidden bg-white font-[family-name:'DejaVu_Sans',sans-serif] text-black">
      <header className="flex h-[260px] items-start pr-[17px]">
        <div className="flex h-[242px] flex-1 items-start border-b-[12px] border-[#008080] pt-[66px] pl-[60px]">
          <h1 className="text-[100px] leading-[120px] whitespace-nowrap text-[#992850]">L&apos;applicazione di controllo</h1>
        </div>
        <div className="pt-[5px]">
          <Seal />
        </div>
      </header>
      <main className="mt-[67px] grid grid-cols-[495px_1fr_377px] text-[66px] leading-[83px] font-bold text-[#f00]">
        <aside className="pt-[287px] pl-[26px] whitespace-nowrap">
          <p>
            Comando al
            <br />
            transistor 1
          </p>
          <div className="mt-[372px] pl-[17px]">
            <p>
              Finestre di
              <br />
              trend
            </p>
            <p className="text-[58px] leading-[72px]">
              (servono
              <br />a vedere
              <br />
              l’andamento
              <br />
              nel tempo
              <br />
              dei segnali,
              <br />
              ovvero delle
              <br />
              variabili,
              <br />
              d’interesse)
            </p>
          </div>
        </aside>
        <div className="mt-[21px] min-w-0 leading-normal font-normal">
          <AppWindow />
        </div>
        <aside className="pr-[26px] text-right">
          <p>
            Pulsante
            <br />
            di stop
          </p>
          <p className="mt-[34px]">
            Comandi
            <br />
            manuali
          </p>
          <p className="mt-[45px]">
            Misure
            <br />
            dal
            <br />
            processo
            <br />
            fisico
          </p>
        </aside>
      </main>
      <footer className="mt-[69px] flex items-start justify-between pl-[826px] text-[66px] leading-[83px] font-bold whitespace-nowrap">
        <p className="text-[#f00]">Comando d’inizio e fine della registrazione su disco</p>
        <p className="pt-[12px] text-[56px]">1</p>
      </footer>
      <Arrows />
    </div>
  );
}
